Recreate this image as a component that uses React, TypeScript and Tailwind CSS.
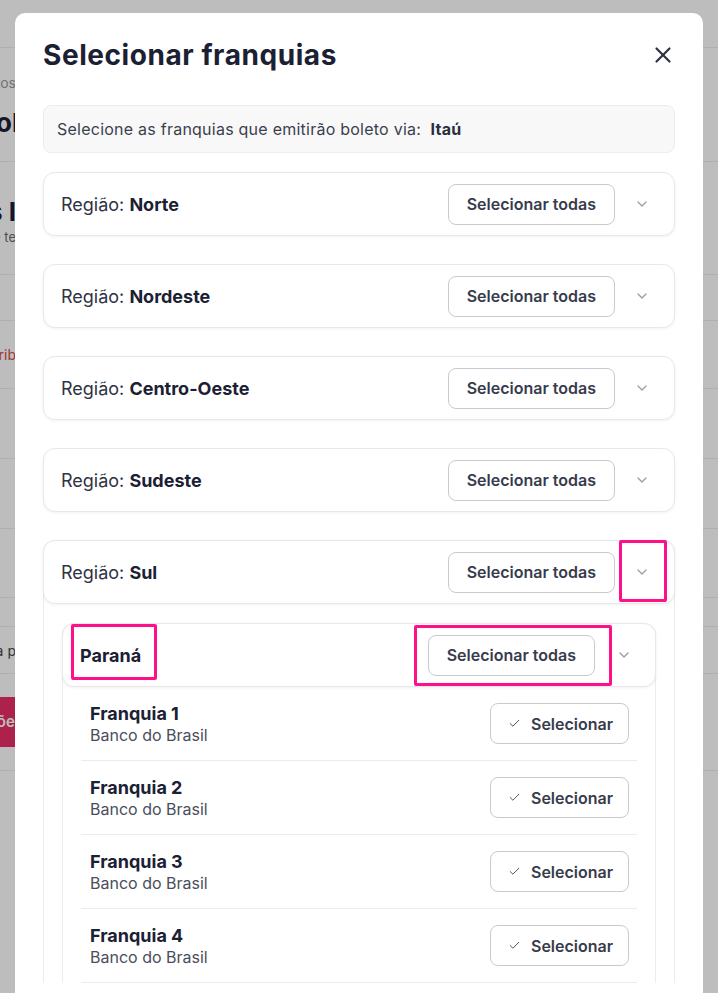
import React from 'react';
import { X, ChevronDown, Check } from 'lucide-react';

const regions = ['Norte', 'Nordeste', 'Centro-Oeste', 'Sudeste'];
const franquias = ['Franquia 1', 'Franquia 2', 'Franquia 3', 'Franquia 4'];

function SelectAllButton() {
  return (
    <button className="h-[41px] shrink-0 rounded-[8px] border border-[#c9cad0] bg-white px-[18px] text-[16px] font-semibold text-[#383b4c]">
      Selecionar todas
    </button>
  );
}

function Chevron() {
  return <ChevronDown className="h-4 w-4 shrink-0 text-[#9a9ea6]" strokeWidth={2} />;
}

function RegionHeader({ name }: { name: string }) {
  return (
    <div className="flex h-[64px] items-center gap-[19px] rounded-[12px] border border-[#e8e8ec] bg-white pl-[17px] pr-[24px] shadow-[0_1px_3px_rgba(16,24,40,0.06)]">
      <div className="flex-1 text-[18px] text-[#2f3342]">
        Região: <span className="font-bold text-[#1b2033]">{name}</span>
      </div>
      <SelectAllButton />
      <Chevron />
    </div>
  );
}

export default function App() {
  return (
    <div className="relative h-[993px] w-[718px] overflow-hidden bg-white font-['Inter',sans-serif]">
      {/* page behind the modal */}
      <div className="flex flex-col">
        <div className="h-[48px] border-b border-[#ececec]" />
        <div className="flex h-[114px] flex-col gap-[10px] border-b border-[#ececec] pt-[24px]">
          <div className="flex w-[16px] justify-end whitespace-nowrap text-[14px] text-[#9a9a9a]">Boletos</div>
          <div className="flex w-[19px] justify-end whitespace-nowrap text-[26px] font-bold text-[#1b2033]">Control</div>
        </div>
        <div className="flex h-[112px] flex-col pt-[34px]">
          <div className="flex w-[16px] justify-end whitespace-nowrap text-[26px] font-bold leading-[32px] text-[#1b2033]">Tarifas I</div>
          <div className="flex w-[16px] justify-end whitespace-nowrap text-[13px] text-[#6b6b6b]">Valores de te</div>
        </div>
        <div className="h-[47px] border-y border-[#ececec]" />
        <div className="flex h-[68px] items-center border-b border-[#ececec]">
          <div className="flex w-[16px] justify-end whitespace-nowrap text-[14px] text-[#e04848]">Distrib</div>
        </div>
        <div className="h-[70px] border-b border-[#ececec]" />
        <div className="h-[70px] border-b border-[#ececec]" />
        <div className="h-[69px] border-b border-[#ececec]" />
        <div className="h-[29px] border-b border-[#ececec]" />
        <div className="flex h-[47px] items-center border-b border-[#ececec]">
          <div className="flex w-[16px] justify-end whitespace-nowrap text-[14px] text-[#444]">para p</div>
        </div>
        <div className="flex h-[97px] items-center border-b border-[#ececec]">
          <div className="-ml-[60px] flex h-[50px] w-[100px] items-center justify-end rounded-[6px] bg-[#ea2f69] pr-[17px] text-[15px] font-semibold text-white">
            <span className="whitespace-nowrap">Ações</span>
          </div>
        </div>
      </div>

      {/* overlay */}
      <div className="absolute inset-0 bg-black/[0.26]" />

      {/* modal */}
      <div className="absolute bottom-0 left-[15px] top-[13px] w-[688px] rounded-t-[10px] bg-white px-[28px] pt-[23px]">
        <div className="flex items-center justify-between">
          <h2 className="text-[28px] font-bold leading-[38px] tracking-[0.02em] text-[#1b2033]">Selecionar franquias</h2>
          <X className="-mr-[1px] h-[26px] w-[26px] text-[#2d3142]" strokeWidth={2} />
        </div>

        <div className="mt-[31px] flex h-[48px] items-center rounded-[8px] border border-[#ededf0] bg-[#f8f8f9] px-[13px] text-[16px] tracking-[0.015em] text-[#3b3f4d]">
          Selecione as franquias que emitirão boleto via:&nbsp;&nbsp;<span className="font-bold text-[#2a2e3d]">Itaú</span>
        </div>

        <div className="mt-[19px] flex flex-col gap-[28px]">
          {regions.map((r) => (
            <RegionHeader key={r} name={r} />
          ))}

          <div className="relative rounded-t-[12px] border-x border-[#ececef]">
            <div className="-mx-px">
              <RegionHeader name="Sul" />
            </div>
            <div className="absolute right-[7px] top-0 h-[62px] w-[48px] rounded-[2px] border-[3px] border-[#ff0f8a]" />

            <div className="px-[18px] pt-[19px]">
              <div className="relative rounded-t-[12px] border-x border-[#ececef]">
                <div className="-mx-px">
                  <div className="flex h-[64px] items-center gap-[21px] rounded-[12px] border border-[#e8e8ec] bg-white pl-[17px] pr-[23px] shadow-[0_1px_3px_rgba(16,24,40,0.06)]">
                    <div className="flex-1 text-[18px] font-bold text-[#1b2033]">Paraná</div>
                    <SelectAllButton />
                    <Chevron />
                  </div>
                </div>
                <div className="absolute left-[8px] top-[1px] h-[56px] w-[86px] rounded-[2px] border-[3px] border-[#ff0f8a]" />
                <div className="absolute left-[351px] top-[2px] h-[61px] w-[198px] rounded-[2px] border-[3px] border-[#ff0f8a]" />

                <div className="px-[18px]">
                  {franquias.map((f) => (
                    <div key={f} className="flex h-[74px] items-center border-b border-[#ebebee] pl-[9px] pr-[8px]">
                      <div className="flex-1">
                        <div className="text-[18px] font-bold leading-[22px] text-[#1b2033]">{f}</div>
                        <div className="text-[16px] leading-[20px] text-[#4a4e5c]">Banco do Brasil</div>
                      </div>
                      <button className="flex h-[41px] w-[139px] items-center gap-[10px] rounded-[8px] border border-[#c9cad0] bg-white pl-[17px] text-[16px] font-semibold text-[#383b4c]">
                        <Check className="h-[13px] w-[13px]" strokeWidth={1.6} />
                        Selecionar
                      </button>
                    </div>
                  ))}
                </div>
              </div>
            </div>
          </div>
        </div>
      </div>
    </div>
  );
}
